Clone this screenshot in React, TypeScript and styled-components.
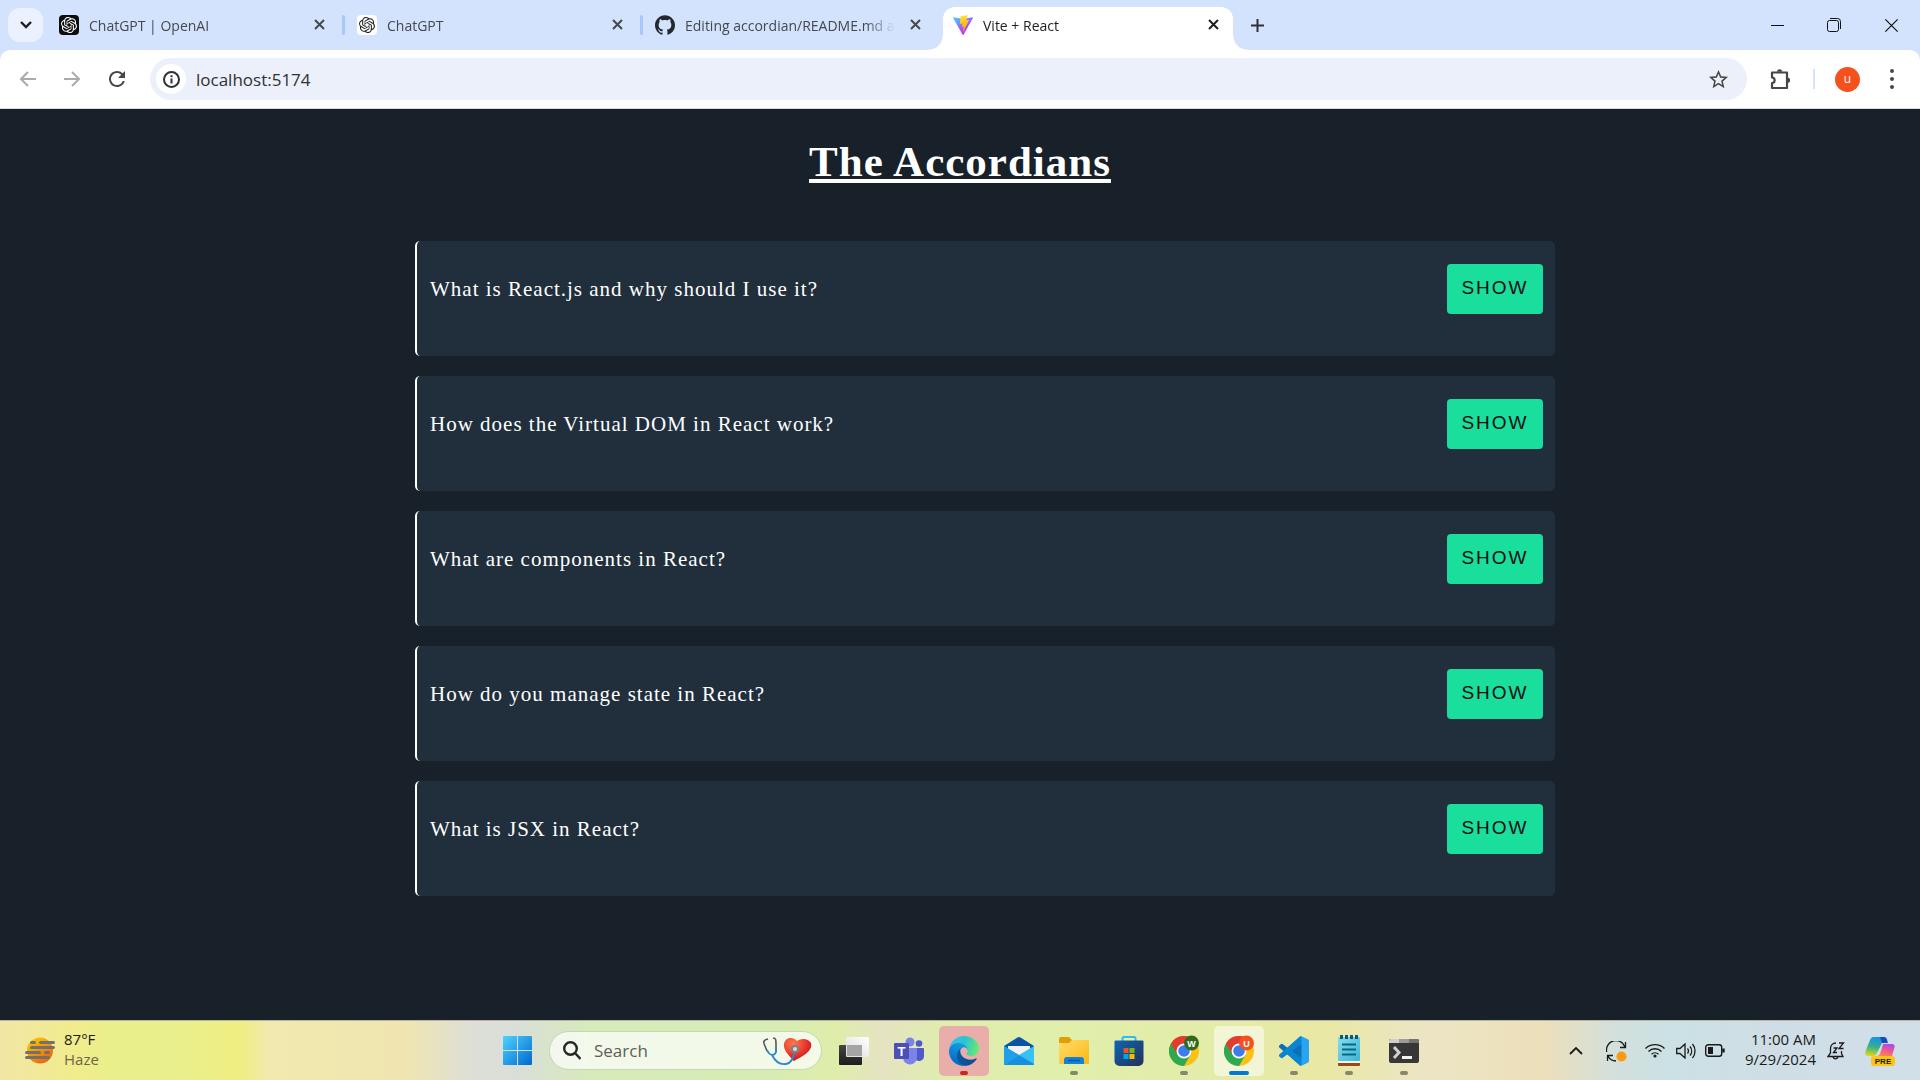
import React, { useState } from "react";
import styled, { createGlobalStyle, css } from "styled-components";
import { SiOpenai, SiGithub } from "react-icons/si";
import { MdRefresh, MdStarBorder } from "react-icons/md";

const ui = `"Segoe UI", "Open Sans", "Noto Sans", sans-serif`;

const GlobalStyle = createGlobalStyle`
  *, *::before, *::after { box-sizing: border-box; }
  body { margin: 0; background: #18202a; }
  button, input { font: inherit; color: inherit; border: 0; padding: 0; background: none; }
  svg { display: block; flex: none; }
`;

const Screen = styled.div`
  display: flex;
  flex-direction: column;
  min-height: 100vh;
  font-family: ${ui};
`;

/* ---------- browser ---------- */

const TabStrip = styled.header`
  display: flex;
  align-items: flex-end;
  height: 50px;
  padding-left: 8px;
  background: #d3e3fd;
  color: #45484d;
  font-size: 14px;
`;

const TabSearch = styled.button`
  display: grid;
  place-items: center;
  flex: none;
  width: 35px;
  height: 34px;
  margin: 0 6px 8px 0;
  border-radius: 12px;
  background: #ebf1fe;
  color: #1f1f1f;
`;

const Tabs = styled.div`
  display: flex;
  gap: 8px;
  min-width: 0;
`;

const Tab = styled.div<{ $active?: boolean; $divided?: boolean }>`
  position: relative;
  display: flex;
  align-items: center;
  flex: 0 1 290px;
  width: 290px;
  min-width: 0;
  height: 43px;
  padding: 0 10px 8px;
  gap: 10px;
  ${(p) =>
    p.$divided &&
    css`
      &::after {
        content: "";
        position: absolute;
        right: -6px;
        top: 8px;
        width: 3px;
        height: 20px;
        border-radius: 2px;
        background: #a8c7fa;
      }
    `}
  ${(p) =>
    p.$active &&
    css`
      background: #fff;
      color: #1f1f1f;
      border-radius: 12px 12px 0 0;
      &::before,
      &::after {
        content: "";
        position: absolute;
        bottom: 0;
        width: 14px;
        height: 14px;
      }
      &::before {
        left: -14px;
        background: radial-gradient(circle at 0 0, transparent 13px, #fff 14px);
      }
      &::after {
        right: -14px;
        background: radial-gradient(circle at 100% 0, transparent 13px, #fff 14px);
      }
    `}
`;

const TabLabel = styled.button`
  display: flex;
  align-items: center;
  flex: 1;
  min-width: 0;
  gap: 10px;
  height: 36px;
  text-align: left;
`;

const TabTitle = styled.span`
  flex: 1;
  padding-top: 2px;
  white-space: nowrap;
  line-height: 20px;
  mask-image: linear-gradient(to right, #000 calc(100% - 30px), transparent);
`;

const Favicon = styled.span<{ $bg?: string; $fg?: string }>`
  display: grid;
  place-items: center;
  flex: none;
  width: 20px;
  height: 20px;
  border-radius: 4px;
  background: ${(p) => p.$bg ?? "transparent"};
  color: ${(p) => p.$fg ?? "#24292f"};
`;

const IconButton = styled.button<{ $w?: number; $h?: number }>`
  display: grid;
  place-items: center;
  flex: none;
  width: ${(p) => p.$w ?? 20}px;
  height: ${(p) => p.$h ?? 20}px;
`;

const NewTab = styled(IconButton)`
  margin: 0 0 8px 6px;
`;

const WindowControls = styled.div`
  display: flex;
  margin-left: auto;
  color: #111;
`;

const ToolbarBack = styled.div`
  background: #d3e3fd;
`;

const Toolbar = styled.nav`
  display: flex;
  align-items: center;
  height: 59px;
  padding: 0 6px;
  border-bottom: 1px solid #d5dbdf;
  border-radius: 10px 10px 0 0;
  background: #fff;
  color: #474747;
`;

const Omnibox = styled.form`
  display: flex;
  align-items: center;
  flex: 1;
  height: 42px;
  margin: 0 11px 0 10px;
  padding: 0 17px 0 6px;
  border-radius: 21px;
  background: #ecf0fa;
`;

const SiteInfo = styled.button`
  display: grid;
  place-items: center;
  width: 30px;
  height: 30px;
  margin-right: 10px;
  border-radius: 50%;
  background: #fff;
  color: #303134;
`;

const Address = styled.input`
  flex: 1;
  min-width: 0;
  height: 36px;
  outline: 0;
  font-size: 17px;
  color: #303134;
`;

const ToolDivider = styled.span`
  width: 2px;
  height: 20px;
  margin: 0 11px;
  background: #d3e3fd;
`;

const Avatar = styled.button`
  width: 25px;
  height: 25px;
  margin: 0 10px 0 9px;
  border-radius: 50%;
  background: #f4511e;
  color: #fff;
  font-size: 12px;
  line-height: 24px;
`;

/* ---------- page ---------- */

const Page = styled.main`
  flex: 1;
  padding: 28px 24px 64px;
  background: #18202a;
  color: #fff;
  font-family: "Times New Roman", "Liberation Serif", serif;
`;

const Title = styled.h1`
  margin: 0 0 54px;
  font-size: 43px;
  line-height: 50px;
  letter-spacing: 1px;
  text-align: center;
  text-decoration: underline;
`;

const List = styled.ul`
  display: flex;
  flex-direction: column;
  gap: 20px;
  max-width: 1190px;
  margin: 0 auto;
  padding: 0 0 0 50px;
  list-style: none;
`;

const Card = styled.li`
  min-height: 115px;
  padding: 23px 12px 24px 13px;
  border-left: 2px solid #fff;
  border-radius: 5px;
  background: #212f3c;
`;

const CardHead = styled.div`
  display: flex;
  align-items: center;
  justify-content: space-between;
`;

const Question = styled.h2`
  margin: 0;
  font-size: 21px;
  font-weight: 400;
  line-height: 24px;
  letter-spacing: 1px;
`;

const Toggle = styled.button`
  min-width: 96px;
  height: 50px;
  padding: 0 14px 2px;
  border-radius: 4px;
  background: #1ade9c;
  color: #0b0f14;
  font-family: Arial, "Liberation Sans", sans-serif;
  font-size: 19px;
  letter-spacing: 2px;
  cursor: pointer;
`;

const Answer = styled.p`
  margin: 16px 0 0;
  font-size: 18px;
  line-height: 24px;
`;

/* ---------- taskbar ---------- */

const Taskbar = styled.footer`
  display: grid;
  grid-template-columns: 1fr auto 1fr;
  align-items: center;
  height: 60px;
  border-top: 1px solid #b9b5a0;
  color: #1b1b1b;
  font-size: 15px;
  line-height: 20px;
  background: linear-gradient(
    to right,
    #f2e6a6 0%,
    #f1ec8c 4%,
    #e9f08a 6%,
    #e8ef8c 9%,
    #f0ee82 12.6%,
    #f1e9ae 14%,
    #f0e5b0 21%,
    #dedfd6 24.5%,
    #d9dfd8 27%,
    #d6ebb8 31%,
    #d6ecb4 40%,
    #dfedaa 43.5%,
    #e5e3c2 46%,
    #dfedae 49%,
    #e0efaa 56%,
    #e4ecaa 63%,
    #e9e8a4 69%,
    #ece5c4 74%,
    #ede2be 78%,
    #ecdfba 80.5%,
    #d3e0dc 84%,
    #cbe1e4 87%,
    #cfdee6 92%,
    #d1dfe8 100%
  );
`;

const Weather = styled.button`
  display: flex;
  align-items: center;
  justify-self: start;
  gap: 9px;
  padding-left: 25px;
  text-align: left;
`;

const Lines = styled.span<{ $end?: boolean }>`
  display: flex;
  flex-direction: column;
  padding-bottom: 4px;
  text-align: ${(p) => (p.$end ? "right" : "left")};
`;

const Muted = styled.span`
  color: #6a6748;
`;

const Apps = styled.div`
  display: flex;
  align-items: center;
  gap: 5px;
  padding-left: 12px;
`;

const SearchBox = styled.label`
  display: flex;
  align-items: center;
  width: 273px;
  height: 39px;
  margin: 0 2px 0 12px;
  padding: 0 8px 0 13px;
  gap: 13px;
  border-radius: 20px;
  border: 1px solid #c6d6ae;
  background: rgba(255, 255, 255, 0.7);
`;

const SearchInput = styled.input`
  flex: 1;
  min-width: 0;
  outline: 0;
  font-size: 17px;
  &::placeholder {
    color: #5c5f58;
    opacity: 1;
  }
`;

const AppButton = styled.button<{ $bg?: string; $mark?: string; $wide?: boolean }>`
  position: relative;
  display: grid;
  place-items: center;
  width: 50px;
  height: 50px;
  border-radius: 5px;
  background: ${(p) => p.$bg ?? "transparent"};
  ${(p) =>
    p.$mark &&
    css`
      &::after {
        content: "";
        position: absolute;
        left: 50%;
        bottom: 1px;
        width: ${p.$wide ? 20 : 8}px;
        height: 4px;
        margin-left: ${p.$wide ? -10 : -4}px;
        border-radius: 2px;
        background: ${p.$mark};
      }
    `}
`;

const Tray = styled.div`
  display: flex;
  align-items: center;
  justify-self: end;
  padding-right: 25px;
`;

const TrayButton = styled(IconButton)<{ $gap?: number }>`
  margin-right: ${(p) => p.$gap ?? 0}px;
`;

/* ---------- drawings ---------- */

const Cross = ({ s = 11, w = 2 }: { s?: number; w?: number }) => (
  <svg width={s} height={s} viewBox="0 0 11 11" stroke="currentColor" strokeWidth={w}>
    <path d="M1 1l9 9M10 1l-9 9" />
  </svg>
);

const ViteLogo = () => (
  <svg width="20" height="20" viewBox="0 0 256 257">
    <defs>
      <linearGradient id="va" x1="-.8%" x2="57.6%" y1="7.6%" y2="78.4%">
        <stop offset="0%" stopColor="#41D1FF" />
        <stop offset="100%" stopColor="#BD34FE" />
      </linearGradient>
      <linearGradient id="vb" x1="43.4%" x2="50.3%" y1="2.2%" y2="89%">
        <stop offset="0%" stopColor="#FFEA83" />
        <stop offset="8.3%" stopColor="#FFDD35" />
        <stop offset="100%" stopColor="#FFA800" />
      </linearGradient>
    </defs>
    <path fill="url(#va)" d="M255.2 37.9 134.9 253a6.5 6.5 0 0 1-11.4.1L.9 38a6.5 6.5 0 0 1 6.8-9.7l120.4 21.5c.8.1 1.5.1 2.3 0l118-21.4a6.5 6.5 0 0 1 6.8 9.6Z" />
    <path fill="url(#vb)" d="M185.4.1 96.4 17.5a3.3 3.3 0 0 0-2.6 3l-5.5 92.5a3.3 3.3 0 0 0 4 3.4l24.8-5.7a3.3 3.3 0 0 1 4 3.8l-7.4 36a3.3 3.3 0 0 0 4.2 3.8l15.3-4.6a3.3 3.3 0 0 1 4.1 3.8l-11.7 56.6c-.7 3.6 4 5.5 6 2.5l1.3-2 72.5-144.8a3.3 3.3 0 0 0-3.5-4.6l-25.5 4.9a3.3 3.3 0 0 1-3.8-4.1l16.7-57.7a3.3 3.3 0 0 0-3.9-4.2Z" />
  </svg>
);

const ArrowLeft = ({ flip }: { flip?: boolean }) => (
  <svg width="16" height="16" viewBox="0 0 16 16" fill="none" stroke="#a9abad" strokeWidth="2">
    <path d={flip ? "M0 8h14M8 1l7 7-7 7" : "M16 8H2M8 1L1 8l7 7"} />
  </svg>
);

const WeatherIcon = () => (
  <svg width="30" height="27" viewBox="0 0 30 27">
    <defs>
      <linearGradient id="sun" x1="0" x2=".7" y1="0" y2="1">
        <stop offset="0" stopColor="#fdd400" />
        <stop offset="1" stopColor="#f0610c" />
      </linearGradient>
    </defs>
    <circle cx="15" cy="13.5" r="13" fill="url(#sun)" />
    <path d="M6.500 5.500h3M15.500 5.500h13M6.500 10.500h22M1.500 15.500h13M20.500 15.500h3M1.500 20.500h22" stroke="#717171" strokeWidth="3" strokeLinecap="round" />
  </svg>
);

const WindowsLogo = () => (
  <svg width="29" height="29" viewBox="0 0 29 29">
    <defs>
      <linearGradient id="win" x1="0" y1="0" x2="1" y2="1" gradientUnits="objectBoundingBox">
        <stop offset="0" stopColor="#4fd3ff" />
        <stop offset="1" stopColor="#0068cf" />
      </linearGradient>
    </defs>
    <path fill="url(#win)" d="M1 0h13v14H0V1a1 1 0 0 1 1-1Zm14 0h13a1 1 0 0 1 1 1v13H15ZM0 15h14v14H1a1 1 0 0 1-1-1Zm15 0h14v13a1 1 0 0 1-1 1H15Z" />
  </svg>
);

const HeartIcon = () => (
  <svg width="50" height="30" viewBox="0 0 50 30">
    <defs>
      <radialGradient id="heart" cx=".35" cy=".25" r=".8">
        <stop offset="0" stopColor="#ff7b4a" />
        <stop offset=".6" stopColor="#e8352c" />
        <stop offset="1" stopColor="#b5121f" />
      </radialGradient>
    </defs>
    <path fill="url(#heart)" d="M31 25C25 19 20 13 21 8c1-7 9-8 13-3 4-3 11-3 14 2 2 8-8 13-17 18Z" />
    <path d="M5 3C0 4 0 6 2 10l2 5M10 2c3 0 3 2 3 6v8" fill="none" stroke="#55585b" strokeWidth="1.600" />
    <path d="M4 14c2 5 7 7 9 2v-4M9 19c3 6 8 10 14 9 6-1 8-7 9-14" fill="none" stroke="#2f86cf" strokeWidth="1.800" />
    <circle cx="32" cy="13" r="4" fill="#79838c" />
    <circle cx="32" cy="13" r="2" fill="#d7dcdf" />
  </svg>
);

const TaskViewIcon = () => (
  <svg width="30" height="30" viewBox="0 0 30 30">
    <defs>
      <linearGradient id="tv1" x1="0" y1="0" x2="0" y2="1"><stop offset="0" stopColor="#454545" /><stop offset="1" stopColor="#1c1c1c" /></linearGradient>
      <linearGradient id="tv2" x1="1" y1="0" x2="0" y2="1"><stop offset="0" stopColor="#fff" /><stop offset="1" stopColor="#dcdcdc" /></linearGradient>
    </defs>
    <rect x="0" y="9" width="23" height="20" rx="1" fill="url(#tv1)" />
    <rect x="7" y="1" width="23" height="20" rx="1" fill="url(#tv2)" />
    <rect x="8" y="9" width="15" height="11" fill="#a5a5a5" />
  </svg>
);

const TeamsIcon = () => (
  <svg width="30" height="30" viewBox="0 0 30 30">
    <circle cx="25" cy="7.500" r="3.300" fill="#5059c9" />
    <path d="M20 12h9a1 1 0 0 1 1 1v7a5 5 0 0 1-9 3Z" fill="#5059c9" />
    <circle cx="16" cy="6" r="4.500" fill="#7b83eb" />
    <path d="M9 12h14v9a7 7 0 0 1-14 1Z" fill="#7b83eb" />
    <rect x="0" y="7" width="15" height="16" rx="1" fill="#4b4fb6" />
    <text x="7.500" y="19.500" fill="#fff" fontSize="13" fontWeight="700" textAnchor="middle" fontFamily="Liberation Sans, sans-serif">T</text>
  </svg>
);

const EdgeIcon = () => (
  <svg width="30" height="30" viewBox="0 0 256 256">
    <defs>
      <linearGradient id="e1" x1="0" x2="1"><stop offset="0" stopColor="#0c59a4" /><stop offset="1" stopColor="#114a8b" /></linearGradient>
      <linearGradient id="e2" x1=".6" y1="0" x2=".3" y2="1"><stop offset="0" stopColor="#1b9de2" /><stop offset="1" stopColor="#0067c0" /></linearGradient>
      <linearGradient id="e3" x1="0" y1=".3" x2="1" y2=".5"><stop offset="0" stopColor="#35c1f1" /><stop offset=".5" stopColor="#2bc3d2" /><stop offset="1" stopColor="#66eb6e" /></linearGradient>
    </defs>
    <path fill="url(#e1)" d="M231 190.500c-3.400 1.800-6.900 3.400-10.500 4.700a101.700 101.700 0 0 1-35.900 6.500c-47.300 0-88.500-32.500-88.500-74.300.1-11.400 6.400-21.900 16.400-27.300-42.800 1.800-53.800 46.400-53.800 72.500 0 73.900 68.100 81.400 82.800 81.400 7.900 0 19.800-2.300 27-4.600l1.300-.4a128.300 128.300 0 0 0 66.600-52.800 4 4 0 0 0-5.400-5.700Z" />
    <path fill="url(#e2)" d="M105.700 241.400a79.200 79.200 0 0 1-22.700-21.300 80.700 80.700 0 0 1 29.500-120c3.100-1.500 8.500-4.100 15.600-4a32.400 32.400 0 0 1 25.700 13 31.900 31.900 0 0 1 6.300 18.700c0-.2 24.500-79.600-80-79.600-43.900 0-80 41.700-80 78.200-.2 19.300 4 38.500 12.100 56a128 128 0 0 0 156.400 67.100 75.500 75.500 0 0 1-62.800-8Z" />
    <path fill="url(#e3)" d="M152.300 148.900c-.9 1-3.400 2.500-3.400 5.600 0 2.600 1.700 5.200 4.800 7.300 14.300 10 41.400 8.600 41.500 8.600 10.700 0 21.100-2.900 30.300-8.300a61.800 61.800 0 0 0 30.400-53.100c.3-22.400-8-37.300-11.300-43.900C223.500 23.900 177.700 0 128 0A128 128 0 0 0 0 126.200c.5-36.500 36.800-66 80-66 3.500 0 23.500.3 42 10 16.300 8.600 24.900 19 30.800 29.200 6.200 10.700 7.300 24.100 7.300 29.500 0 5.300-2.700 13.300-7.800 20Z" />
  </svg>
);

const MailIcon = () => (
  <svg width="30" height="30" viewBox="0 0 30 30">
    <path d="M0 10 13.500 1.500a3 3 0 0 1 3 0L30 10v6H0Z" fill="#0a54a8" />
    <path d="M4 10h22v8l-11 4-11-4Z" fill="#f3f3f6" />
    <path d="M0 10l15 9 15-9v18a1 1 0 0 1-1 1H1a1 1 0 0 1-1-1Z" fill="#36c3f4" />
    <path d="M30 28 15 19 0 29h29a1 1 0 0 0 1-1Z" fill="#178fe0" />
    <path d="M0 10l15 9L0 29Z" fill="#1f9fe6" />
  </svg>
);

const FolderIcon = () => (
  <svg width="30" height="28" viewBox="0 0 30 28">
    <defs><linearGradient id="fol" x1="0" y1="0" x2="1" y2="1"><stop offset="0" stopColor="#ffdc6b" /><stop offset="1" stopColor="#fcb813" /></linearGradient></defs>
    <path d="M0 2a2 2 0 0 1 2-2h8l3 3v4H0Z" fill="#e09f06" />
    <path d="M0 6h10l3-3h16a1 1 0 0 1 1 1v22a1 1 0 0 1-1 1H1a1 1 0 0 1-1-1Z" fill="url(#fol)" />
    <path d="M5 27v-4a3 3 0 0 1 3-3h14a3 3 0 0 1 3 3v4Z" fill="#1583d4" />
    <path d="M9 23.500h12" stroke="#0b5aa5" strokeWidth="1.500" />
  </svg>
);

const StoreIcon = () => (
  <svg width="30" height="30" viewBox="0 0 30 30">
    <defs><linearGradient id="sto" x1="0" y1="0" x2="1" y2="1"><stop offset="0" stopColor="#0b67b5" /><stop offset="1" stopColor="#263057" /></linearGradient></defs>
    <path d="M8.500 6V2.500a1.500 1.500 0 0 1 1.500-1.500h10a1.500 1.500 0 0 1 1.500 1.500V6" fill="none" stroke="#2dbdee" strokeWidth="2" />
    <path d="M1.500 4.500h27a1 1 0 0 1 1 1V25a5 5 0 0 1-5 5h-19a5 5 0 0 1-5-5V5.500a1 1 0 0 1 1-1Z" fill="url(#sto)" />
    <path d="M9.500 12h5v5h-5Z" fill="#f25022" /><path d="M15.500 12h5v5h-5Z" fill="#7fba00" />
    <path d="M9.500 18h5v5h-5Z" fill="#00a4ef" /><path d="M15.500 18h5v5h-5Z" fill="#ffb900" />
  </svg>
);

const ChromeIcon = ({ badge, letter }: { badge: string; letter: string }) => (
  <svg width="30" height="31" viewBox="0 0 30 31">
    <circle cx="15" cy="16" r="15" fill="#fbc116" />
    <path d="M15 16 2 8.500A15 15 0 0 0 15 31l6.500-11.200Z" fill="#2da94f" />
    <path d="M15 16 2 8.500a15 15 0 0 1 26 0H15Z" fill="#e33b2e" />
    <path d="M2 8.500 8.500 19.800 15 9h13A15 15 0 0 0 2 8.500Z" fill="#e33b2e" />
    <circle cx="15" cy="16" r="7.500" fill="#fff" />
    <circle cx="15" cy="16" r="5.800" fill="#3b7ded" />
    <circle cx="22.500" cy="8" r="7.500" fill={badge} />
    <text x="22.500" y="11.500" fill="#fff" fontSize="9" fontWeight="700" textAnchor="middle" fontFamily="Liberation Sans, sans-serif">{letter}</text>
  </svg>
);

const CodeIcon = () => (
  <svg width="30" height="30" viewBox="0 0 100 100">
    <path d="M71 1 29 40 12 27a4 4 0 0 0-5 0L1 32a4 4 0 0 0 0 6l70 61 6-3V25L43 50l34 25V3Z" fill="#0c6fb8" />
    <path d="M71 99 29 60 12 73a4 4 0 0 1-5 0L1 68a4 4 0 0 1 0-6L71 1l6 5v19L43 50l34 25v20Z" fill="#0a85d1" />
    <path d="M71 1a5 5 0 0 1 4 0l21 10a7 7 0 0 1 4 6v66a7 7 0 0 1-4 6L75 99a6 6 0 0 1-4 0c2 0 4-2 4-5V6c0-3-2-5-4-5Z" fill="#27a5f3" />
  </svg>
);

const NotepadIcon = () => (
  <svg width="22" height="31" viewBox="0 0 22 31">
    <defs><linearGradient id="not" x1="0" y1="0" x2="1" y2="1"><stop offset="0" stopColor="#84dcef" /><stop offset="1" stopColor="#3fb3d5" /></linearGradient></defs>
    <rect x="0" y="25" width="22" height="6" rx="1" fill="#954a14" />
    <rect x="0" y="24" width="22" height="4" fill="#eef3f5" />
    <rect x="0" y="2" width="22" height="24" rx="1" fill="url(#not)" />
    <path d="M4 9.500h14M4 14.500h14M4 19.500h14" stroke="#09677e" strokeWidth="2" />
    <path d="M3.500 0v4M8.500 0v4M13.500 0v4M18.500 0v4" stroke="#0d5971" strokeWidth="3" />
  </svg>
);

const TerminalIcon = () => (
  <svg width="30" height="24" viewBox="0 0 30 24">
    <rect width="30" height="24" rx="2" fill="#373737" />
    <path d="M2 0h8v4H0V2a2 2 0 0 1 2-2Z" fill="#cfcfcf" />
    <path d="M10 0h10v4H10Z" fill="#9c9c9c" /><path d="M20 0h8a2 2 0 0 1 2 2v2H20Z" fill="#727272" />
    <path d="M5 8l5 5.500L5 19" fill="none" stroke="#d0d0d0" strokeWidth="3" />
    <path d="M13 18.500h10" stroke="#f2f2f2" strokeWidth="3" />
  </svg>
);

const CopilotIcon = () => (
  <svg width="30" height="30" viewBox="0 0 30 30">
    <defs>
      <linearGradient id="c1" x1=".4" y1="0" x2=".2" y2="1"><stop offset="0" stopColor="#1791e8" /><stop offset=".5" stopColor="#35b08a" /><stop offset="1" stopColor="#e5d813" /></linearGradient>
      <linearGradient id="c2" x1=".7" y1="0" x2=".3" y2="1"><stop offset="0" stopColor="#a64be8" /><stop offset=".5" stopColor="#ee5797" /><stop offset="1" stopColor="#fb8a4a" /></linearGradient>
    </defs>
    <path d="M8 1h10c3 0 3 3 4 6h-5l-5 10c-1 2-2 3-4 3H3c-3 0-3-3-2-6L5 4c1-2 2-3 3-3Z" fill="url(#c1)" />
    <path d="M15 1h4c3 0 3 3 4 6h-6Z" fill="#1a49c4" />
    <path d="M18 8h9c3 0 3 3 2 5l-2 7H12c2 0 3-2 4-5Z" fill="url(#c2)" />
    <rect x="6" y="20" width="24" height="10" rx="3" fill="#fcc515" />
    <text x="18" y="28" fill="#1b1b1b" fontSize="8" fontWeight="700" textAnchor="middle" fontFamily="Liberation Sans, sans-serif">PRE</text>
  </svg>
);

/* ---------- data ---------- */

const tabs = [
  { title: "ChatGPT | OpenAI", icon: <Favicon $bg="#0d0d0d" $fg="#fff"><SiOpenai size={16} /></Favicon>, divided: true },
  { title: "ChatGPT", icon: <Favicon $bg="#fff" $fg="#222"><SiOpenai size={16} /></Favicon>, divided: true },
  { title: "Editing accordian/README.md a", icon: <Favicon><SiGithub size={20} /></Favicon> },
  { title: "Vite + React", icon: <Favicon><ViteLogo /></Favicon>, active: true },
];

const faqs = [
  { q: "What is React.js and why should I use it?", a: "React.js is a JavaScript library for building user interfaces from reusable components." },
  { q: "How does the Virtual DOM in React work?", a: "React compares a light copy of the DOM with the previous one and updates only what changed." },
  { q: "What are components in React?", a: "Components are independent, reusable pieces of the interface." },
  { q: "How do you manage state in React?", a: "Local state is managed with hooks such as useState and useReducer." },
  { q: "What is JSX in React?", a: "JSX is a syntax extension that lets you write markup inside JavaScript." },
];

const apps = [
  { name: "Task view", icon: <TaskViewIcon /> },
  { name: "Teams", icon: <TeamsIcon /> },
  { name: "Edge", icon: <EdgeIcon />, bg: "#e9aeaa", mark: "#c42b1c" },
  { name: "Mail", icon: <MailIcon /> },
  { name: "File Explorer", icon: <FolderIcon />, mark: "#85886a" },
  { name: "Store", icon: <StoreIcon /> },
  { name: "Chrome W", icon: <ChromeIcon badge="#33691e" letter="W" />, mark: "#85886a" },
  { name: "Chrome U", icon: <ChromeIcon badge="#f4511e" letter="U" />, bg: "#f2f6d6", mark: "#0078d4", wide: true },
  { name: "Visual Studio Code", icon: <CodeIcon />, mark: "#85886a" },
  { name: "Notepad", icon: <NotepadIcon />, mark: "#85886a" },
  { name: "Terminal", icon: <TerminalIcon />, mark: "#85886a" },
];

function Faq({ q, a }: { q: string; a: string }) {
  const [open, setOpen] = useState(false);
  return (
    <Card>
      <CardHead>
        <Question>{q}</Question>
        <Toggle aria-expanded={open} onClick={() => setOpen(!open)}>{open ? "HIDE" : "SHOW"}</Toggle>
      </CardHead>
      {open && <Answer>{a}</Answer>}
    </Card>
  );
}

export default function App() {
  return (
    <Screen>
      <GlobalStyle />
      <TabStrip>
        <TabSearch aria-label="Search tabs">
          <svg width="12" height="8" viewBox="0 0 12 8" fill="none" stroke="currentColor" strokeWidth="2.400"><path d="M1 1l5 5 5-5" /></svg>
        </TabSearch>
        <Tabs>
          {tabs.map((t) => (
            <Tab key={t.title} $active={t.active} $divided={t.divided}>
              <TabLabel>
                {t.icon}
                <TabTitle>{t.title}</TabTitle>
              </TabLabel>
              <IconButton aria-label={`Close ${t.title}`}><Cross /></IconButton>
            </Tab>
          ))}
        </Tabs>
        <NewTab aria-label="New tab" $w={36} $h={34}>
          <svg width="13" height="13" viewBox="0 0 13 13" stroke="#303134" strokeWidth="2"><path d="M6.500 0v13M0 6.500h13" /></svg>
        </NewTab>
        <WindowControls>
          <IconButton aria-label="Minimize" $w={56} $h={50}>
            <svg width="13" height="13" viewBox="0 0 13 13" stroke="currentColor"><path d="M0 6.500h13" /></svg>
          </IconButton>
          <IconButton aria-label="Restore" $w={57} $h={50}>
            <svg width="14" height="14" viewBox="0 0 14 14" fill="none" stroke="currentColor"><rect x=".5" y="2.500" width="11" height="11" rx="2" /><path d="M3 .5h7.500a3 3 0 0 1 3 3V11" /></svg>
          </IconButton>
          <IconButton aria-label="Close window" $w={58} $h={50}><Cross s={15} w={0.9} /></IconButton>
        </WindowControls>
      </TabStrip>
      <ToolbarBack>
        <Toolbar aria-label="Browser toolbar">
          <IconButton aria-label="Back" $w={44} $h={36}><ArrowLeft /></IconButton>
          <IconButton aria-label="Forward" $w={44} $h={36}><ArrowLeft flip /></IconButton>
          <IconButton aria-label="Reload" $w={46} $h={36}><MdRefresh size={24} /></IconButton>
          <Omnibox onSubmit={(e) => e.preventDefault()}>
            <SiteInfo type="button" aria-label="Site information">
              <svg width="17" height="17" viewBox="0 0 17 17" fill="none" stroke="currentColor" strokeWidth="2"><circle cx="8.500" cy="8.500" r="7.500" /><path d="M8.500 7.500v5M8.500 4.200v2" /></svg>
            </SiteInfo>
            <Address aria-label="Address" defaultValue="localhost:5174" />
            <IconButton type="button" aria-label="Bookmark" $w={24} $h={24}><MdStarBorder size={23} /></IconButton>
          </Omnibox>
          <IconButton aria-label="Extensions" $w={44} $h={36}>
            <svg width="22" height="22" viewBox="0 0 22 22">
              <path d="M3 4.500h15v15.500H3v-5c3.500 0 3.500-5.500 0-5.500Z" fill="none" stroke="currentColor" strokeWidth="2.200" strokeLinejoin="round" />
              <path d="M8 3.800a2.600 2.600 0 0 1 5.200 0ZM18.500 9.600a2.600 2.600 0 0 1 0 5.200Z" fill="currentColor" />
            </svg>
          </IconButton>
          <ToolDivider />
          <Avatar aria-label="Profile">u</Avatar>
          <IconButton aria-label="Menu" $w={44} $h={36}>
            <svg width="4" height="20" viewBox="0 0 4 20" fill="currentColor"><circle cx="2" cy="2" r="2" /><circle cx="2" cy="10" r="2" /><circle cx="2" cy="18" r="2" /></svg>
          </IconButton>
        </Toolbar>
      </ToolbarBack>

      <Page>
        <Title>The Accordians</Title>
        <List>
          {faqs.map((f) => <Faq key={f.q} {...f} />)}
        </List>
      </Page>

      <Taskbar>
        <Weather>
          <WeatherIcon />
          <Lines><span>87°F</span><Muted>Haze</Muted></Lines>
        </Weather>
        <Apps>
          <IconButton aria-label="Start" $w={29} $h={50}><WindowsLogo /></IconButton>
          <SearchBox>
            <svg width="18" height="19" viewBox="0 0 18 19" fill="none" stroke="#262626" strokeWidth="2.400"><circle cx="7.500" cy="7.500" r="6.300" /><path d="M12 12l5.500 6" /></svg>
            <SearchInput aria-label="Search" placeholder="Search" />
            <HeartIcon />
          </SearchBox>
          {apps.map((a) => (
            <AppButton key={a.name} aria-label={a.name} $bg={a.bg} $mark={a.mark} $wide={a.wide}>{a.icon}</AppButton>
          ))}
        </Apps>
        <Tray>
          <TrayButton aria-label="Show hidden icons" $gap={20}>
            <svg width="14" height="8" viewBox="0 0 14 8" fill="none" stroke="currentColor" strokeWidth="1.800"><path d="M1 7l6-6 6 6" /></svg>
          </TrayButton>
          <TrayButton aria-label="Updates" $gap={19}>
            <svg width="21" height="21" viewBox="0 0 21 21" fill="none" stroke="currentColor" strokeWidth="1.300">
              <path d="M.700 11A9.500 9.500 0 0 1 19 6M19.500 1v5.500H14M1.500 20v-5.500H7M2 15a9 9 0 0 0 8 5" /><circle cx="15.500" cy="15.500" r="5" fill="#fb9a0b" stroke="none" />
            </svg>
          </TrayButton>
          <TrayButton aria-label="Network" $gap={11}>
            <svg width="20" height="15" viewBox="0 0 20 15" fill="none" stroke="currentColor" strokeWidth="1.400"><path d="M.5 5.500a13.500 13.500 0 0 1 19 0M3.500 8.500a9.200 9.200 0 0 1 13 0M6.500 11.300a5 5 0 0 1 7 0" /><circle cx="10" cy="13" r="1.600" fill="currentColor" stroke="none" /></svg>
          </TrayButton>
          <TrayButton aria-label="Volume" $gap={9}>
            <svg width="20" height="16" viewBox="0 0 20 16" fill="none" stroke="currentColor" strokeWidth="1.300"><path d="M.7 5.500H4l5-4.500v14l-5-4.500H.7ZM11.500 5.500a4 4 0 0 1 0 5M14 3.500a7 7 0 0 1 0 9M16.500 1a11 11 0 0 1 0 14" /></svg>
          </TrayButton>
          <TrayButton aria-label="Battery" $gap={20}>
            <svg width="20" height="13" viewBox="0 0 20 13" fill="none" stroke="currentColor" strokeWidth="1.400"><rect x=".7" y=".7" width="16" height="11.600" rx="2.500" /><rect x="3" y="3" width="5" height="7" fill="currentColor" stroke="none" /><path d="M18.500 4.500v4" strokeWidth="2.400" /></svg>
          </TrayButton>
          <Lines $end><span>11:00 AM</span><span>9/29/2024</span></Lines>
          <TrayButton aria-label="Notifications" $w={40} $h={30} $gap={9}>
            <svg width="18" height="18" viewBox="0 0 18 18" fill="none" stroke="currentColor" strokeWidth="1.300"><path d="M9 1C5.500 1 3.500 3.500 3.500 6.500V11L1 14.500h15L14.500 11.500V9M6 15c1 2.500 4 2.500 5 0M6.500 6h3.500l-3.500 4.500H10M12 1h4.500L12 6.500h4.500" /></svg>
          </TrayButton>
          <IconButton aria-label="Copilot" $w={30} $h={30}><CopilotIcon /></IconButton>
        </Tray>
      </Taskbar>
    </Screen>
  );
}
